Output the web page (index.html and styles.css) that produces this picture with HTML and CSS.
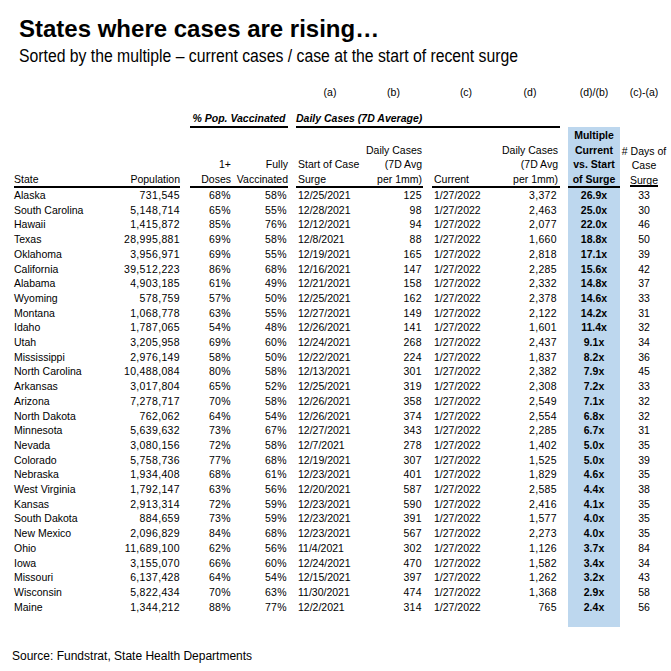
FILE: index.html
```html
<!DOCTYPE html>
<html>
<head>
<meta charset="utf-8">
<link rel="stylesheet" href="styles.css">
</head>
<body>
<div class="page">
  <h1 class="title">States where cases are rising…</h1>
  <p class="subtitle">Sorted by the multiple – current cases / case at the start of recent surge</p>
  <table class="grid">
    <colgroup>
      <col class="c-state"><col class="c-pop"><col class="c-sp10">
      <col class="c-dose"><col class="c-fully"><col class="c-sp8">
      <col class="c-start"><col class="c-b"><col class="c-sp9">
      <col class="c-cur"><col class="c-d"><col class="c-sp8">
      <col class="c-mult"><col class="c-days">
    </colgroup>
    <thead>
      <tr class="letters">
        <th colspan="6"></th>
        <th class="ctr">(a)</th><th class="ctr">(b)</th><th></th>
        <th class="ctr">(c)</th><th class="ctr">(d)</th><th></th>
        <th class="ctr">(d)/(b)</th><th class="ctr">(c)-(a)</th>
      </tr>
      <tr class="groups">
        <th colspan="3"></th>
        <th colspan="2" class="grp ctr">% Pop. Vaccinated</th>
        <th></th>
        <th colspan="5" class="grp lft">Daily Cases (7D Average)</th>
        <th colspan="3"></th>
      </tr>
      <tr class="heads">
        <th class="ul lft">State</th>
        <th class="ul rgt">Population</th>
        <th></th>
        <th class="ul rgt">1+<br>Doses</th>
        <th class="ul rgt">Fully<br>Vaccinated</th>
        <th></th>
        <th class="ul lft pl2">Start of Case<br>Surge</th>
        <th class="ul rgt pr1">Daily Cases<br>(7D Avg<br>per 1mm)</th>
        <th></th>
        <th class="ul lft pl2">Current</th>
        <th class="ul rgt pr2">Daily Cases<br>(7D Avg<br>per 1mm)</th>
        <th></th>
        <th class="ul ctr mult bold">Multiple<br>Current<br>vs. Start<br>of Surge</th>
        <th class="ctr days">#&nbsp;Days of<br>Case<br>Surge</th>
      </tr>
    </thead>
    <tbody>
      <tr><td>Alaska</td><td class="num">731,545</td><td></td><td class="num">68%</td><td class="num pr1">58%</td><td></td><td class="pl2">12/25/2021</td><td class="num pr1">125</td><td></td><td class="pl2">1/27/2022</td><td class="num pr3">3,372</td><td></td><td class="mult bold ctr">26.9x</td><td class="ctr">33</td></tr>
      <tr><td>South Carolina</td><td class="num">5,148,714</td><td></td><td class="num">65%</td><td class="num pr1">55%</td><td></td><td class="pl2">12/28/2021</td><td class="num pr1">98</td><td></td><td class="pl2">1/27/2022</td><td class="num pr3">2,463</td><td></td><td class="mult bold ctr">25.0x</td><td class="ctr">30</td></tr>
      <tr><td>Hawaii</td><td class="num">1,415,872</td><td></td><td class="num">85%</td><td class="num pr1">76%</td><td></td><td class="pl2">12/12/2021</td><td class="num pr1">94</td><td></td><td class="pl2">1/27/2022</td><td class="num pr3">2,077</td><td></td><td class="mult bold ctr">22.0x</td><td class="ctr">46</td></tr>
      <tr><td>Texas</td><td class="num">28,995,881</td><td></td><td class="num">69%</td><td class="num pr1">58%</td><td></td><td class="pl2">12/8/2021</td><td class="num pr1">88</td><td></td><td class="pl2">1/27/2022</td><td class="num pr3">1,660</td><td></td><td class="mult bold ctr">18.8x</td><td class="ctr">50</td></tr>
      <tr><td>Oklahoma</td><td class="num">3,956,971</td><td></td><td class="num">69%</td><td class="num pr1">55%</td><td></td><td class="pl2">12/19/2021</td><td class="num pr1">165</td><td></td><td class="pl2">1/27/2022</td><td class="num pr3">2,818</td><td></td><td class="mult bold ctr">17.1x</td><td class="ctr">39</td></tr>
      <tr><td>California</td><td class="num">39,512,223</td><td></td><td class="num">86%</td><td class="num pr1">68%</td><td></td><td class="pl2">12/16/2021</td><td class="num pr1">147</td><td></td><td class="pl2">1/27/2022</td><td class="num pr3">2,285</td><td></td><td class="mult bold ctr">15.6x</td><td class="ctr">42</td></tr>
      <tr><td>Alabama</td><td class="num">4,903,185</td><td></td><td class="num">61%</td><td class="num pr1">49%</td><td></td><td class="pl2">12/21/2021</td><td class="num pr1">158</td><td></td><td class="pl2">1/27/2022</td><td class="num pr3">2,332</td><td></td><td class="mult bold ctr">14.8x</td><td class="ctr">37</td></tr>
      <tr><td>Wyoming</td><td class="num">578,759</td><td></td><td class="num">57%</td><td class="num pr1">50%</td><td></td><td class="pl2">12/25/2021</td><td class="num pr1">162</td><td></td><td class="pl2">1/27/2022</td><td class="num pr3">2,378</td><td></td><td class="mult bold ctr">14.6x</td><td class="ctr">33</td></tr>
      <tr><td>Montana</td><td class="num">1,068,778</td><td></td><td class="num">63%</td><td class="num pr1">55%</td><td></td><td class="pl2">12/27/2021</td><td class="num pr1">149</td><td></td><td class="pl2">1/27/2022</td><td class="num pr3">2,122</td><td></td><td class="mult bold ctr">14.2x</td><td class="ctr">31</td></tr>
      <tr><td>Idaho</td><td class="num">1,787,065</td><td></td><td class="num">54%</td><td class="num pr1">48%</td><td></td><td class="pl2">12/26/2021</td><td class="num pr1">141</td><td></td><td class="pl2">1/27/2022</td><td class="num pr3">1,601</td><td></td><td class="mult bold ctr">11.4x</td><td class="ctr">32</td></tr>
      <tr><td>Utah</td><td class="num">3,205,958</td><td></td><td class="num">69%</td><td class="num pr1">60%</td><td></td><td class="pl2">12/24/2021</td><td class="num pr1">268</td><td></td><td class="pl2">1/27/2022</td><td class="num pr3">2,437</td><td></td><td class="mult bold ctr">9.1x</td><td class="ctr">34</td></tr>
      <tr><td>Mississippi</td><td class="num">2,976,149</td><td></td><td class="num">58%</td><td class="num pr1">50%</td><td></td><td class="pl2">12/22/2021</td><td class="num pr1">224</td><td></td><td class="pl2">1/27/2022</td><td class="num pr3">1,837</td><td></td><td class="mult bold ctr">8.2x</td><td class="ctr">36</td></tr>
      <tr><td>North Carolina</td><td class="num">10,488,084</td><td></td><td class="num">80%</td><td class="num pr1">58%</td><td></td><td class="pl2">12/13/2021</td><td class="num pr1">301</td><td></td><td class="pl2">1/27/2022</td><td class="num pr3">2,382</td><td></td><td class="mult bold ctr">7.9x</td><td class="ctr">45</td></tr>
      <tr><td>Arkansas</td><td class="num">3,017,804</td><td></td><td class="num">65%</td><td class="num pr1">52%</td><td></td><td class="pl2">12/25/2021</td><td class="num pr1">319</td><td></td><td class="pl2">1/27/2022</td><td class="num pr3">2,308</td><td></td><td class="mult bold ctr">7.2x</td><td class="ctr">33</td></tr>
      <tr><td>Arizona</td><td class="num">7,278,717</td><td></td><td class="num">70%</td><td class="num pr1">58%</td><td></td><td class="pl2">12/26/2021</td><td class="num pr1">358</td><td></td><td class="pl2">1/27/2022</td><td class="num pr3">2,549</td><td></td><td class="mult bold ctr">7.1x</td><td class="ctr">32</td></tr>
      <tr><td>North Dakota</td><td class="num">762,062</td><td></td><td class="num">64%</td><td class="num pr1">54%</td><td></td><td class="pl2">12/26/2021</td><td class="num pr1">374</td><td></td><td class="pl2">1/27/2022</td><td class="num pr3">2,554</td><td></td><td class="mult bold ctr">6.8x</td><td class="ctr">32</td></tr>
      <tr><td>Minnesota</td><td class="num">5,639,632</td><td></td><td class="num">73%</td><td class="num pr1">67%</td><td></td><td class="pl2">12/27/2021</td><td class="num pr1">343</td><td></td><td class="pl2">1/27/2022</td><td class="num pr3">2,285</td><td></td><td class="mult bold ctr">6.7x</td><td class="ctr">31</td></tr>
      <tr><td>Nevada</td><td class="num">3,080,156</td><td></td><td class="num">72%</td><td class="num pr1">58%</td><td></td><td class="pl2">12/7/2021</td><td class="num pr1">278</td><td></td><td class="pl2">1/27/2022</td><td class="num pr3">1,402</td><td></td><td class="mult bold ctr">5.0x</td><td class="ctr">35</td></tr>
      <tr><td>Colorado</td><td class="num">5,758,736</td><td></td><td class="num">77%</td><td class="num pr1">68%</td><td></td><td class="pl2">12/19/2021</td><td class="num pr1">307</td><td></td><td class="pl2">1/27/2022</td><td class="num pr3">1,525</td><td></td><td class="mult bold ctr">5.0x</td><td class="ctr">39</td></tr>
      <tr><td>Nebraska</td><td class="num">1,934,408</td><td></td><td class="num">68%</td><td class="num pr1">61%</td><td></td><td class="pl2">12/23/2021</td><td class="num pr1">401</td><td></td><td class="pl2">1/27/2022</td><td class="num pr3">1,829</td><td></td><td class="mult bold ctr">4.6x</td><td class="ctr">35</td></tr>
      <tr><td>West Virginia</td><td class="num">1,792,147</td><td></td><td class="num">63%</td><td class="num pr1">56%</td><td></td><td class="pl2">12/20/2021</td><td class="num pr1">587</td><td></td><td class="pl2">1/27/2022</td><td class="num pr3">2,585</td><td></td><td class="mult bold ctr">4.4x</td><td class="ctr">38</td></tr>
      <tr><td>Kansas</td><td class="num">2,913,314</td><td></td><td class="num">72%</td><td class="num pr1">59%</td><td></td><td class="pl2">12/23/2021</td><td class="num pr1">590</td><td></td><td class="pl2">1/27/2022</td><td class="num pr3">2,416</td><td></td><td class="mult bold ctr">4.1x</td><td class="ctr">35</td></tr>
      <tr><td>South Dakota</td><td class="num">884,659</td><td></td><td class="num">73%</td><td class="num pr1">59%</td><td></td><td class="pl2">12/23/2021</td><td class="num pr1">391</td><td></td><td class="pl2">1/27/2022</td><td class="num pr3">1,577</td><td></td><td class="mult bold ctr">4.0x</td><td class="ctr">35</td></tr>
      <tr><td>New Mexico</td><td class="num">2,096,829</td><td></td><td class="num">84%</td><td class="num pr1">68%</td><td></td><td class="pl2">12/23/2021</td><td class="num pr1">567</td><td></td><td class="pl2">1/27/2022</td><td class="num pr3">2,273</td><td></td><td class="mult bold ctr">4.0x</td><td class="ctr">35</td></tr>
      <tr><td>Ohio</td><td class="num">11,689,100</td><td></td><td class="num">62%</td><td class="num pr1">56%</td><td></td><td class="pl2">11/4/2021</td><td class="num pr1">302</td><td></td><td class="pl2">1/27/2022</td><td class="num pr3">1,126</td><td></td><td class="mult bold ctr">3.7x</td><td class="ctr">84</td></tr>
      <tr><td>Iowa</td><td class="num">3,155,070</td><td></td><td class="num">66%</td><td class="num pr1">60%</td><td></td><td class="pl2">12/24/2021</td><td class="num pr1">470</td><td></td><td class="pl2">1/27/2022</td><td class="num pr3">1,582</td><td></td><td class="mult bold ctr">3.4x</td><td class="ctr">34</td></tr>
      <tr><td>Missouri</td><td class="num">6,137,428</td><td></td><td class="num">64%</td><td class="num pr1">54%</td><td></td><td class="pl2">12/15/2021</td><td class="num pr1">397</td><td></td><td class="pl2">1/27/2022</td><td class="num pr3">1,262</td><td></td><td class="mult bold ctr">3.2x</td><td class="ctr">43</td></tr>
      <tr><td>Wisconsin</td><td class="num">5,822,434</td><td></td><td class="num">70%</td><td class="num pr1">63%</td><td></td><td class="pl2">11/30/2021</td><td class="num pr1">474</td><td></td><td class="pl2">1/27/2022</td><td class="num pr3">1,368</td><td></td><td class="mult bold ctr">2.9x</td><td class="ctr">58</td></tr>
      <tr><td>Maine</td><td class="num">1,344,212</td><td></td><td class="num">88%</td><td class="num pr1">77%</td><td></td><td class="pl2">12/2/2021</td><td class="num pr1">314</td><td></td><td class="pl2">1/27/2022</td><td class="num pr3">765</td><td></td><td class="mult bold ctr">2.4x</td><td class="ctr">56</td></tr>
      <tr class="tail"><td colspan="12"></td><td class="mult"></td><td></td></tr>
    </tbody>
  </table>
  <p class="source">Source: Fundstrat, State Health Departments</p>
</div>
</body>
</html>
```

FILE: styles.css
```css
html, body {
  margin: 0;
  padding: 0;
  background: #ffffff;
}

.page {
  width: 671px;
  height: 671px;
  overflow: hidden;
  color: #000000;
  font-family: "Liberation Sans", Arial, sans-serif;
}

.title {
  margin: 14px 0 0 19px;
  font-weight: bold;
  font-size: 24px;
  line-height: 30px;
  white-space: nowrap;
}

.subtitle {
  margin: 1px 0 0 19px;
  font-size: 17.5px;
  line-height: 22px;
  white-space: nowrap;
  transform: scaleX(0.9);
  transform-origin: 0 0;
}

.grid {
  margin: 18px 0 0 14px;
  border-collapse: collapse;
  table-layout: fixed;
  width: 654px;
  font-size: 10.5px;
}

.c-state { width: 96px; }
.c-pop { width: 70px; }
.c-sp10 { width: 10px; }
.c-dose { width: 41px; }
.c-fully { width: 57px; }
.c-sp8 { width: 8px; }
.c-start { width: 68px; }
.c-b { width: 59px; }
.c-sp9 { width: 9px; }
.c-cur { width: 68px; }
.c-d { width: 60px; }
.c-mult { width: 52px; }
.c-days { width: 48px; }

.grid th,
.grid td {
  padding: 0;
  white-space: nowrap;
  overflow: visible;
}

.grid th {
  font-weight: normal;
  vertical-align: bottom;
}

.letters th {
  height: 15px;
  line-height: 15px;
}

.groups th {
  height: 26px;
  line-height: 15px;
}

.grp {
  font-weight: bold !important;
  font-style: italic;
  border-bottom: 2px solid #000;
}

.heads th {
  height: 58px;
  line-height: 14.5px;
}

.ul {
  border-bottom: 2px solid #000;
}

.days {
  background: linear-gradient(#000, #000) 10px 100% / 28px 2px no-repeat;
}

.grid td {
  height: 14.7px;
  line-height: 14.7px;
  vertical-align: middle;
}

.tail td {
  height: 13px;
}

.lft { text-align: left; }
.rgt { text-align: right; }
.ctr { text-align: center; }
.num { text-align: right; letter-spacing: 0.35px; }

.pl2 { padding-left: 2px !important; }
.pr1 { padding-right: 1px !important; }
.pr2 { padding-right: 2px !important; }
.pr3 { padding-right: 3px !important; }

.bold { font-weight: bold !important; }

.mult {
  background: #bdd7ee;
}

.source {
  margin: 22px 0 0 12px;
  font-size: 12px;
  line-height: 14px;
}
```
